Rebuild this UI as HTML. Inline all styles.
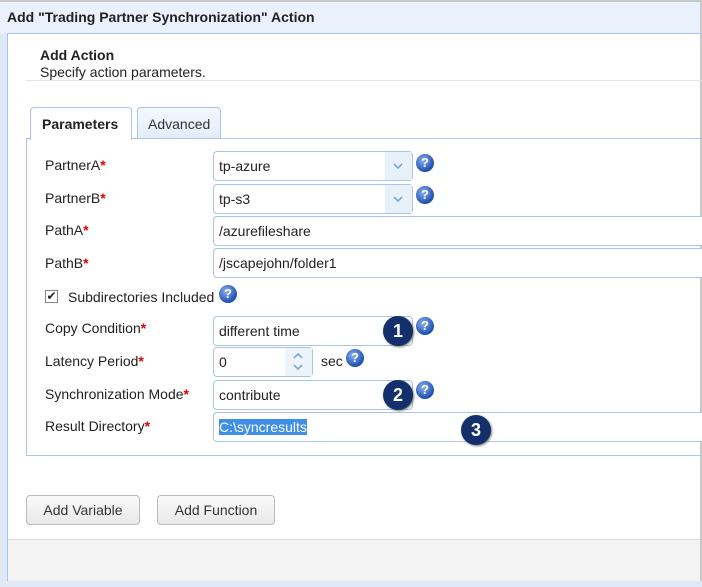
<!DOCTYPE html>
<html><head><style>
*{box-sizing:border-box;margin:0;padding:0}
body{width:702px;height:587px;overflow:hidden;font-family:"Liberation Sans",Arial,sans-serif;font-size:14px;color:#222;background:#dfe8f6;position:relative}
.a{position:absolute}
.title{left:0;top:0;width:702px;height:34px;background:#eaf1fc;border-top:2px solid #c8c8c8;border-right:2px solid #c8c8c8;font-weight:bold;font-size:14px;padding:7px 0 0 7px;color:#222}
.panel{left:7px;top:33px;width:695px;height:548px;background:#fff;border-top:1px solid #a9c4e6;border-left:1px solid #a9c4e6;border-right:2px solid #c8c8c8}
.lbl{left:45px;font-size:14px}
.lbl b{color:#d00;font-weight:bold}
.in{left:213px;height:30px;border:1px solid #a9c4e6;border-radius:4px;background:#fff;padding:6px 0 0 5px;font-size:14px}
.dd{position:absolute;right:0;top:0;width:27px;height:28px;background:#e8f0fa}
.dd svg{position:absolute;left:8px;top:11px}
.help{width:18px;height:18px;border-radius:50%;background:radial-gradient(circle at 40% 35%,#8ab0ee,#1d4fb0 70%);color:#fff;font-weight:bold;font-size:13px;text-align:center;line-height:18px}
.num{width:30px;height:30px;border-radius:50%;background:#13306b;color:#fff;font-weight:bold;font-size:18px;text-align:center;line-height:30px;box-shadow:1px 1px 2px #777}
.btn{top:495px;height:30px;border:1px solid #bbb;border-radius:4px;background:linear-gradient(#fafafa,#e8e8e8);font-size:14px;text-align:center;line-height:28px;color:#333}
</style></head><body>
<div class="a title">Add "Trading Partner Synchronization" Action</div>
<div class="a panel"></div>
<div class="a" style="left:40px;top:47px;font-weight:bold">Add Action</div>
<div class="a" style="left:40px;top:64px">Specify action parameters.</div>
<div class="a" style="left:26px;top:80px;width:676px;height:1px;background:#e2e2e2"></div>
<div class="a" style="left:26px;top:138px;width:676px;height:318px;border:1px solid #a9c4e6;border-right:none"></div>
<div class="a" style="left:30px;top:107px;width:102px;height:33px;background:#fff;border:1px solid #a9c4e6;border-bottom:none;border-radius:4px 4px 0 0;font-weight:bold;padding:8px 0 0 11px">Parameters</div>
<div class="a" style="left:137px;top:107px;width:84px;height:31px;background:linear-gradient(#f4f8fe,#e3edfa);border:1px solid #a9c4e6;border-bottom:none;border-radius:4px 4px 0 0;padding:8px 0 0 10px;color:#333">Advanced</div>

<div class="a lbl" style="top:157px">PartnerA<b>*</b></div>
<div class="a in" style="top:151px;width:200px">tp-azure<div class="dd"><svg width="10" height="7"><path d="M1 1 L5 5 L9 1" stroke="#7aa7d8" stroke-width="1.6" fill="none"/></svg></div></div>
<div class="a help" style="left:416px;top:154px">?</div>
<div class="a lbl" style="top:190px">PartnerB<b>*</b></div>
<div class="a in" style="top:184px;width:200px">tp-s3<div class="dd"><svg width="10" height="7"><path d="M1 1 L5 5 L9 1" stroke="#7aa7d8" stroke-width="1.6" fill="none"/></svg></div></div>
<div class="a help" style="left:416px;top:186px">?</div>
<div class="a lbl" style="top:222px">PathA<b>*</b></div>
<div class="a in" style="top:216px;width:495px;border-right:none">/azurefileshare</div>
<div class="a lbl" style="top:255px">PathB<b>*</b></div>
<div class="a in" style="top:248px;width:495px;border-right:none">/jscapejohn/folder1</div>

<div class="a" style="left:45px;top:290px;width:13px;height:13px;border:1px solid #888;background:#fff;font-size:12px;line-height:11px;text-align:center">&#10004;</div>
<div class="a" style="left:68px;top:289px">Subdirectories Included</div>
<div class="a help" style="left:219px;top:285px">?</div>

<div class="a lbl" style="top:320px">Copy Condition<b>*</b></div>
<div class="a in" style="top:316px;width:200px">different time</div>
<div class="a num" style="left:383px;top:316px">1</div>
<div class="a help" style="left:416px;top:317px">?</div>
<div class="a lbl" style="top:353px">Latency Period<b>*</b></div>
<div class="a in" style="top:347px;width:100px">0<div class="dd" style="background:#eef3fa"><svg width="10" height="20" style="top:4px"><path d="M1 6 L5 2 L9 6 M1 13 L5 17 L9 13" stroke="#7aa7d8" stroke-width="1.6" fill="none"/></svg></div></div>
<div class="a" style="left:321px;top:353px">sec</div>
<div class="a help" style="left:346px;top:349px">?</div>
<div class="a lbl" style="top:386px">Synchronization Mode<b>*</b></div>
<div class="a in" style="top:380px;width:200px">contribute</div>
<div class="a num" style="left:383px;top:380px">2</div>
<div class="a help" style="left:416px;top:381px">?</div>
<div class="a lbl" style="top:418px">Result Directory<b>*</b></div>
<div class="a in" style="top:412px;width:495px;border-right:none"><span style="background:#3f8ee8;color:#fff">C:\syncresults</span></div>
<div class="a num" style="left:461px;top:415px">3</div>

<div class="a btn" style="left:26px;width:114px">Add Variable</div>
<div class="a btn" style="left:157px;width:118px">Add Function</div>
<div class="a" style="left:8px;top:539px;width:692px;height:42px;background:#f3f3f3;border-top:1px solid #ddd"></div>
</body></html>
